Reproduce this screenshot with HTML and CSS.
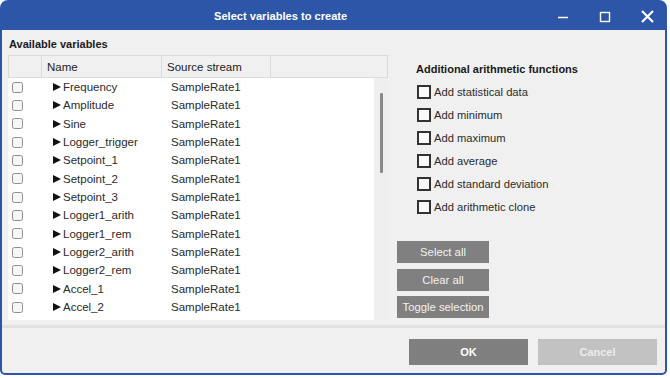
FILE: index.html
```html
<!DOCTYPE html>
<html>
<head>
<meta charset="utf-8">
<link rel="stylesheet" href="styles.css">
</head>
<body>
<div class="window">
  <div class="titlebar">
    <span class="title">Select variables to create</span>
    <div class="controls">
      <span class="ctrl"><svg width="12" height="12" viewBox="0 0 12 12"><path d="M1 6.5h10" stroke="#fff" stroke-width="1.3"/></svg></span>
      <span class="ctrl"><svg width="12" height="12" viewBox="0 0 12 12"><rect x="1.5" y="1.5" width="9" height="9" fill="none" stroke="#fff" stroke-width="1.4"/></svg></span>
      <span class="ctrl"><svg width="13" height="13" viewBox="0 0 13 13"><path d="M1 1L12 12M12 1L1 12" stroke="#fff" stroke-width="2.2"/></svg></span>
    </div>
  </div>
  <div class="content">
    <div class="main">
      <div class="left">
        <div class="section-label">Available variables</div>
        <div class="table">
          <div class="thead">
            <div class="th c-check"></div>
            <div class="th c-name">Name</div>
            <div class="th c-src">Source stream</div>
            <div class="th c-rest"></div>
          </div>
          <div class="tbody">
            <div class="rows">
              <div class="row"><span class="cell-check"><span class="cb"></span></span><span class="cell-name"><i class="tri"></i>Frequency</span><span class="cell-src">SampleRate1</span></div>
              <div class="row"><span class="cell-check"><span class="cb"></span></span><span class="cell-name"><i class="tri"></i>Amplitude</span><span class="cell-src">SampleRate1</span></div>
              <div class="row"><span class="cell-check"><span class="cb"></span></span><span class="cell-name"><i class="tri"></i>Sine</span><span class="cell-src">SampleRate1</span></div>
              <div class="row"><span class="cell-check"><span class="cb"></span></span><span class="cell-name"><i class="tri"></i>Logger_trigger</span><span class="cell-src">SampleRate1</span></div>
              <div class="row"><span class="cell-check"><span class="cb"></span></span><span class="cell-name"><i class="tri"></i>Setpoint_1</span><span class="cell-src">SampleRate1</span></div>
              <div class="row"><span class="cell-check"><span class="cb"></span></span><span class="cell-name"><i class="tri"></i>Setpoint_2</span><span class="cell-src">SampleRate1</span></div>
              <div class="row"><span class="cell-check"><span class="cb"></span></span><span class="cell-name"><i class="tri"></i>Setpoint_3</span><span class="cell-src">SampleRate1</span></div>
              <div class="row"><span class="cell-check"><span class="cb"></span></span><span class="cell-name"><i class="tri"></i>Logger1_arith</span><span class="cell-src">SampleRate1</span></div>
              <div class="row"><span class="cell-check"><span class="cb"></span></span><span class="cell-name"><i class="tri"></i>Logger1_rem</span><span class="cell-src">SampleRate1</span></div>
              <div class="row"><span class="cell-check"><span class="cb"></span></span><span class="cell-name"><i class="tri"></i>Logger2_arith</span><span class="cell-src">SampleRate1</span></div>
              <div class="row"><span class="cell-check"><span class="cb"></span></span><span class="cell-name"><i class="tri"></i>Logger2_rem</span><span class="cell-src">SampleRate1</span></div>
              <div class="row"><span class="cell-check"><span class="cb"></span></span><span class="cell-name"><i class="tri"></i>Accel_1</span><span class="cell-src">SampleRate1</span></div>
              <div class="row"><span class="cell-check"><span class="cb"></span></span><span class="cell-name"><i class="tri"></i>Accel_2</span><span class="cell-src">SampleRate1</span></div>
            </div>
            <div class="scrollbar"><div class="thumb"></div></div>
          </div>
        </div>
      </div>
      <div class="right">
        <div class="group-label">Additional arithmetic functions</div>
        <div class="options">
          <div class="opt"><span class="box"></span>Add statistical data</div>
          <div class="opt"><span class="box"></span>Add minimum</div>
          <div class="opt"><span class="box"></span>Add maximum</div>
          <div class="opt"><span class="box"></span>Add average</div>
          <div class="opt"><span class="box"></span>Add standard deviation</div>
          <div class="opt"><span class="box"></span>Add arithmetic clone</div>
        </div>
        <div class="actions">
          <button class="btn-small">Select all</button>
          <button class="btn-small">Clear all</button>
          <button class="btn-small">Toggle selection</button>
        </div>
      </div>
    </div>
    <div class="footer">
      <button class="btn-main btn-ok">OK</button>
      <button class="btn-main btn-cancel">Cancel</button>
    </div>
  </div>
</div>
</body>
</html>
```

FILE: styles.css
```css
html, body {
  margin: 0;
  padding: 0;
  background: #ffffff;
}
body {
  width: 670px;
  height: 378px;
  overflow: hidden;
  font-family: "Liberation Sans", Arial, sans-serif;
}
.window {
  width: 667px;
  height: 375px;
  box-sizing: border-box;
  border: 2px solid #2d56a8;
  border-radius: 8px 8px 5px 5px;
  background: #2d56a8;
  display: flex;
  flex-direction: column;
  overflow: hidden;
}
.titlebar {
  height: 28px;
  flex: none;
  display: flex;
  align-items: center;
  background: #2d56a8;
  color: #fff;
}
.title {
  margin-left: 212px;
  font-weight: bold;
  font-size: 11.1px;
  padding-bottom: 1px;
}
.controls {
  margin-left: auto;
  display: flex;
  gap: 6px;
  padding-top: 1px;
}
.ctrl {
  width: 36px;
  height: 20px;
  display: flex;
  align-items: center;
  justify-content: center;
}
.content {
  flex: 1;
  background: #f0f0f0;
  display: flex;
  flex-direction: column;
}
.main {
  height: 295px;
  display: flex;
  padding: 7px 0 0 6px;
  box-sizing: border-box;
}
.left {
  width: 380px;
  flex: none;
}
.section-label {
  font-weight: bold;
  font-size: 11px;
  line-height: 14px;
  color: #1a1a1a;
  margin-bottom: 4px;
  padding-left: 1px;
}
.table {
  width: 380px;
}
.thead {
  display: grid;
  grid-template-columns: 34px 120px 109px 1fr;
  height: 23px;
  box-sizing: border-box;
  border-top: 1px solid #dadada;
  border-bottom: 1px solid #dadada;
  background: #f0f0f0;
}
.th {
  border-right: 1px solid #dadada;
  font-size: 11.5px;
  color: #222;
  display: flex;
  align-items: center;
  padding-left: 5px;
}
.th.c-check {
  border-left: 1px solid #dadada;
}
.tbody {
  display: flex;
  height: 242px;
}
.rows {
  width: 366px;
  background: #fff;
}
.row {
  display: grid;
  grid-template-columns: 34px 120px 1fr;
  height: 18.33px;
  align-items: center;
  font-size: 11.5px;
  color: #2b2b2b;
}
.cell-check {
  padding-left: 4px;
  display: flex;
  align-items: center;
}
.cb {
  width: 9px;
  height: 9px;
  border: 1px solid #8f8f8f;
  border-radius: 2.5px;
  background: #f6f6f6;
}
.cell-name {
  padding-left: 11px;
  display: flex;
  align-items: center;
}
.tri {
  width: 0;
  height: 0;
  border-left: 8px solid #111;
  border-top: 4.5px solid transparent;
  border-bottom: 4.5px solid transparent;
  margin-right: 2px;
}
.cell-src {
  padding-left: 9px;
}
.scrollbar {
  width: 14px;
  background: #efefef;
}
.thumb {
  width: 2.5px;
  height: 80px;
  margin: 15px 0 0 6px;
  background: #8a8a8a;
  border-radius: 1px;
}
.right {
  flex: 1;
  padding-left: 9px;
  display: flex;
  flex-direction: column;
}
.group-label {
  margin-top: 25px;
  margin-left: 19px;
  font-weight: bold;
  font-size: 11px;
  line-height: 14px;
  color: #1a1a1a;
}
.options {
  margin-top: 4px;
  margin-left: 20px;
}
.opt {
  height: 23px;
  display: flex;
  align-items: center;
  font-size: 11.2px;
  color: #2b2b2b;
}
.box {
  width: 10px;
  height: 10px;
  border: 2px solid #333;
  background: #fafafa;
  margin-right: 3px;
}
.actions {
  margin-top: 23px;
  display: flex;
  flex-direction: column;
  gap: 5.5px;
}
.btn-small {
  width: 92px;
  height: 22px;
  border: none;
  background: #808080;
  color: #f2f2f2;
  font-family: "Liberation Sans", Arial, sans-serif;
  font-size: 11.3px;
  padding: 0;
}
.footer {
  flex: 1;
  border-top: 3px solid #e2e2e2;
  display: flex;
  justify-content: flex-end;
  align-items: flex-start;
  gap: 10px;
  padding: 11px 8px 0 0;
}
.btn-main {
  width: 119px;
  height: 26px;
  border: none;
  font-family: "Liberation Sans", Arial, sans-serif;
  font-weight: bold;
  font-size: 11px;
  padding: 0;
}
.btn-ok {
  background: #7f7f7f;
  color: #fff;
}
.btn-cancel {
  background: #c2c2c2;
  color: #ececec;
}
```
